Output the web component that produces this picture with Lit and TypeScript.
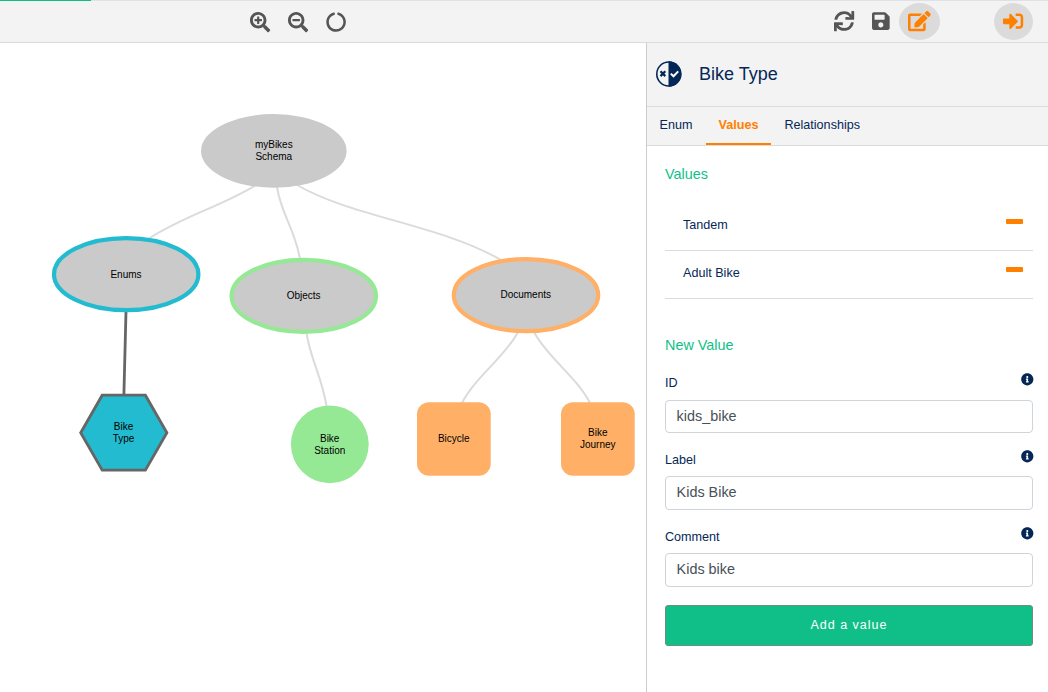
import { LitElement, html, svg, css } from "lit";
import { customElement, property } from "lit/decorators.js";

const ICONS: Record<string, { w: number; d: string }> = {
  zoomIn: { w: 512, d: "M304 192v32c0 6.6-5.4 12-12 12h-56v56c0 6.6-5.4 12-12 12h-32c-6.6 0-12-5.4-12-12v-56h-56c-6.6 0-12-5.4-12-12v-32c0-6.6 5.4-12 12-12h56v-56c0-6.6 5.4-12 12-12h32c6.6 0 12 5.4 12 12v56h56c6.6 0 12 5.4 12 12zm201 284.7L476.7 505c-9.4 9.4-24.6 9.4-33.9 0L343 405.3c-4.5-4.5-7-10.6-7-17V372c-35.3 27.6-79.7 44-128 44C93.1 416 0 322.9 0 208S93.1 0 208 0s208 93.1 208 208c0 48.3-16.4 92.7-44 128h16.3c6.4 0 12.5 2.5 17 7l99.7 99.7c9.3 9.4 9.3 24.6 0 34zM344 208c0-75.2-60.8-136-136-136S72 132.8 72 208s60.8 136 136 136 136-60.8 136-136z" },
  zoomOut: { w: 512, d: "M304 192v32c0 6.6-5.4 12-12 12H124c-6.6 0-12-5.4-12-12v-32c0-6.6 5.4-12 12-12h168c6.6 0 12 5.4 12 12zm201 284.7L476.7 505c-9.4 9.4-24.6 9.4-33.9 0L343 405.3c-4.5-4.5-7-10.6-7-17V372c-35.3 27.6-79.7 44-128 44C93.1 416 0 322.9 0 208S93.1 0 208 0s208 93.1 208 208c0 48.3-16.4 92.7-44 128h16.3c6.4 0 12.5 2.5 17 7l99.7 99.7c9.3 9.4 9.3 24.6 0 34zM344 208c0-75.2-60.8-136-136-136S72 132.8 72 208s60.8 136 136 136 136-60.8 136-136z" },
  notch: { w: 512, d: "M288 39.056v16.659c0 10.804 7.281 20.159 17.686 23.066C383.204 100.434 440 171.518 440 256c0 101.689-82.295 184-184 184-101.689 0-184-82.295-184-184 0-84.47 56.786-155.564 134.312-177.219C216.719 75.874 224 66.517 224 55.712V39.064c0-15.709-14.834-27.153-30.046-23.234C86.603 43.482 7.394 141.206 8.003 257.332c.72 137.052 111.477 246.956 248.531 246.667C393.255 503.711 504 392.788 504 256c0-115.633-79.14-212.779-186.211-240.236C302.678 11.889 288 23.456 288 39.056z" },
  sync: { w: 512, d: "M440.65 12.57l4 82.77A247.16 247.16 0 0 0 255.83 8C134.73 8 33.91 94.92 12.29 209.82A12 12 0 0 0 24.09 224h49.05a12 12 0 0 0 11.67-9.26 175.91 175.91 0 0 1 317-56.94l-101.46-4.86a12 12 0 0 0-12.57 12v47.41a12 12 0 0 0 12 12H500a12 12 0 0 0 12-12V12a12 12 0 0 0-12-12h-47.37a12 12 0 0 0-11.98 12.57zM255.83 432a175.61 175.61 0 0 1-146-77.8l101.8 4.87a12 12 0 0 0 12.57-12v-47.4a12 12 0 0 0-12-12H12a12 12 0 0 0-12 12V500a12 12 0 0 0 12 12h47.35a12 12 0 0 0 12-12.6l-4.15-82.57A247.17 247.17 0 0 0 255.83 504c121.11 0 221.93-86.92 243.55-201.82a12 12 0 0 0-11.8-14.18h-49.05a12 12 0 0 0-11.67 9.26A175.86 175.86 0 0 1 255.83 432z" },
  save: { w: 448, d: "M433.941 129.941l-83.882-83.882A48 48 0 0 0 316.118 32H48C21.49 32 0 53.49 0 80v352c0 26.51 21.49 48 48 48h352c26.51 0 48-21.49 48-48V163.882a48 48 0 0 0-14.059-33.941zM224 416c-35.346 0-64-28.654-64-64 0-35.346 28.654-64 64-64s64 28.654 64 64c0 35.346-28.654 64-64 64zm96-304.52V212c0 6.627-5.373 12-12 12H76c-6.627 0-12-5.373-12-12V108c0-6.627 5.373-12 12-12h228.52c3.183 0 6.235 1.264 8.485 3.515l3.48 3.48A11.996 11.996 0 0 1 320 111.48z" },
  edit: { w: 576, d: "M402.6 83.2l90.2 90.2c3.8 3.8 3.8 10 0 13.8L274.4 405.6l-92.8 10.3c-12.4 1.4-22.9-9.1-21.5-21.5l10.3-92.8L388.8 83.2c3.8-3.8 10-3.8 13.8 0zm162-22.9l-48.8-48.8c-15.2-15.2-39.9-15.2-55.2 0l-35.4 35.4c-3.8 3.8-3.8 10 0 13.8l90.2 90.2c3.8 3.8 10 3.8 13.8 0l35.4-35.4c15.2-15.3 15.2-40 0-55.2zM384 346.2V448H64V128h229.8c3.2 0 6.2-1.3 8.5-3.5l40-40c7.6-7.6 2.2-20.5-8.5-20.5H48C21.5 64 0 85.5 0 112v352c0 26.5 21.5 48 48 48h352c26.5 0 48-21.5 48-48V306.2c0-10.7-12.9-16-20.5-8.5l-40 40c-2.2 2.3-3.5 5.3-3.5 8.5z" },
  signIn: { w: 512, d: "M416 448h-84c-6.6 0-12-5.4-12-12v-40c0-6.6 5.4-12 12-12h84c17.7 0 32-14.3 32-32V160c0-17.7-14.3-32-32-32h-84c-6.6 0-12-5.4-12-12V76c0-6.6 5.4-12 12-12h84c53 0 96 43 96 96v192c0 53-43 96-96 96zm-47-201L201 79c-15-15-41-4.5-41 17v96H24c-13.3 0-24 10.7-24 24v96c0 13.3 10.7 24 24 24h136v96c0 21.5 26 32 41 17l168-168c9.3-9.4 9.3-24.6 0-34z" },
  info: { w: 512, d: "M256 8C119.043 8 8 119.083 8 256c0 136.997 111.043 248 248 248s248-111.003 248-248C504 119.083 392.957 8 256 8zm0 110c23.196 0 42 18.804 42 42s-18.804 42-42 42-42-18.804-42-42 18.804-42 42-42zm56 254c0 6.627-5.373 12-12 12h-88c-6.627 0-12-5.373-12-12v-24c0-6.627 5.373-12 12-12h12v-64h-12c-6.627 0-12-5.373-12-12v-24c0-6.627 5.373-12 12-12h64c6.627 0 12 5.373 12 12v100h12c6.627 0 12 5.373 12 12v24z" },
};

@customElement("ui-icon")
class UiIcon extends LitElement {
  @property() name = "info";
  @property({ type: Number }) size = 20;
  static styles = css`
    :host { display: block; line-height: 0; }
    svg { display: block; fill: currentColor; overflow: visible; }
  `;
  render() {
    const i = ICONS[this.name];
    return html`<svg width=${(this.size * i.w) / 512} height=${this.size} viewBox="0 0 ${i.w} 512"><path d=${i.d}></path></svg>`;
  }
}

interface GraphNode { lines: string[]; x: number; y: number; }

@customElement("schema-graph")
class SchemaGraph extends LitElement {
  static styles = css`
    :host { display: block; overflow: hidden; background: #fff; }
    svg { display: block; }
    .edge { fill: none; stroke: #dbdbdb; stroke-width: 2; }
    .edge-active { fill: none; stroke: #666; stroke-width: 2.8; }
    .group { fill: #cacaca; stroke-width: 4.2; }
    .root { fill: #cacaca; }
    .enums { stroke: #22bbcf; }
    .objects { stroke: #95e995; }
    .documents { stroke: #ffb066; }
    .hex { fill: #22bbcf; stroke: #666; stroke-width: 2.8; }
    .object { fill: #95e995; }
    .document { fill: #ffb066; }
    text { font: 10px "Liberation Sans", Arial, sans-serif; fill: #000; text-anchor: middle; }
  `;
  private labels: GraphNode[] = [
    { lines: ["myBikes", "Schema"], x: 273.8, y: 148 },
    { lines: ["Enums"], x: 126, y: 278 },
    { lines: ["Objects"], x: 303.6, y: 299 },
    { lines: ["Documents"], x: 525.7, y: 298 },
    { lines: ["Bike", "Type"], x: 123.6, y: 430 },
    { lines: ["Bike", "Station"], x: 329.7, y: 442 },
    { lines: ["Bicycle"], x: 453.8, y: 442 },
    { lines: ["Bike", "Journey"], x: 597.8, y: 436 },
  ];
  render() {
    return html`<svg width="646" height="649" viewBox="0 43 646 649">
      <path class="edge" d="M256 185C218 208 187 214 148 239"></path>
      <path class="edge" d="M277 187C281 214 295 229 300 259"></path>
      <path class="edge" d="M297 185C352 217 441 225 501 260"></path>
      <path class="edge" d="M306.5 333C310 358 322 377 326.5 406"></path>
      <path class="edge" d="M518 332C505 357 476 376 462 403"></path>
      <path class="edge" d="M534 332C547 357 576 376 590 403"></path>
      <path class="edge-active" d="M126 311L123.9 395"></path>
      <ellipse class="root" cx="273.8" cy="150.9" rx="72.8" ry="36.8"></ellipse>
      <ellipse class="group enums" cx="126.2" cy="274.2" rx="72.2" ry="36"></ellipse>
      <ellipse class="group objects" cx="303.8" cy="295.9" rx="72.2" ry="36"></ellipse>
      <ellipse class="group documents" cx="526" cy="295.1" rx="72.2" ry="36"></ellipse>
      <polygon class="hex" points="80.7,432.7 102.2,395.2 145.4,395.2 166.9,432.7 145.4,470.1 102.2,470.1"></polygon>
      <circle class="object" cx="329.8" cy="444.3" r="38.9"></circle>
      <rect class="document" x="417" y="402.2" width="73.7" height="73.6" rx="12"></rect>
      <rect class="document" x="561" y="402.2" width="73.7" height="73.6" rx="12"></rect>
      ${this.labels.map((n) => n.lines.map((t, i) => svg`<text x=${n.x} y=${n.y + i * 12}>${t}</text>`))}
    </svg>`;
  }
}

@customElement("side-panel")
class SidePanel extends LitElement {
  static styles = css`
    :host { display: block; box-sizing: border-box; border-left: 1px solid #ccc; background: #fff; color: #052757; font-size: 12.6px; }
    .head { display: flex; align-items: center; box-sizing: border-box; height: 64px; padding: 0 0 2px 9px; background: #f3f3f3; border-bottom: 1px solid #dbdbdb; }
    .head svg { display: block; margin-right: 17px; }
    .title { font-size: 18px; line-height: 22px; }
    .tabs { display: flex; height: 38px; background: #f3f3f3; border-bottom: 1px solid #dbdbdb; }
    .tab { box-sizing: border-box; height: 38px; padding: 10px 13px 0; line-height: 16px; border-bottom: 2px solid transparent; }
    .tab:first-child { padding-left: 12.6px; }
    .active { color: #ff8000; font-weight: bold; border-color: #ff8000; }
    .body { padding: 17px 15px 0 18px; }
    h3 { margin: 0; font-size: 14.4px; font-weight: normal; line-height: 22px; color: #10bf88; }
    .values { padding-top: 18px; margin-bottom: 35px; }
    .row { display: flex; justify-content: space-between; height: 47px; padding: 0 10px 0 18px; border-bottom: 1px solid #dbdbdb; line-height: 44px; }
    .minus { width: 17px; height: 5px; margin-top: 16px; border-radius: 1px; background: #ff8000; }
    .field { display: flex; flex-direction: column; height: 76.8px; }
    .label { display: flex; justify-content: space-between; height: 27.6px; line-height: 20px; margin-right: -0.4px; }
    .label span { padding-top: 1px; }
    .label ui-icon { padding-top: 1px; }
    .input { box-sizing: border-box; height: 33.5px; padding: 0 10.6px; border: 1px solid #ced4da; border-radius: 4px; line-height: 31.4px; font-size: 14.4px; color: #495057; }
    .fields { padding-top: 16px; }
    .button { box-sizing: border-box; display: flex; align-items: center; justify-content: center; height: 41px; margin-top: 2.6px; border: 1px solid #6c8f80; border-radius: 3px; background: #10bf88; color: #fff; font-size: 12.5px; letter-spacing: 1px; }
  `;
  render() {
    const fields = [["ID", "kids_bike"], ["Label", "Kids Bike"], ["Comment", "Kids bike"]];
    return html`
      <div class="head">
        <svg width="26" height="26" viewBox="0 0 26 26">
          <circle cx="12.8" cy="13" r="12" fill="#f3f3f3" stroke="#052757" stroke-width="1.6"></circle>
          <path d="M12.5 .2A12.8 12.8 0 0 1 12.5 25.8Z" fill="#052757"></path>
          <path d="M4.5 10.3L9.3 15.1M9.3 10.3L4.5 15.1" stroke="#052757" stroke-width="2.2" fill="none"></path>
          <path d="M14.8 12.6L17.5 15.3L22.2 10.4" stroke="#fff" stroke-width="2" fill="none"></path>
        </svg>
        <div class="title">Bike Type</div>
      </div>
      <div class="tabs">
        <div class="tab">Enum</div><div class="tab active">Values</div><div class="tab">Relationships</div>
      </div>
      <div class="body">
        <h3>Values</h3>
        <div class="values">
          ${["Tandem", "Adult Bike"].map((v) => html`<div class="row"><span>${v}</span><div class="minus"></div></div>`)}
        </div>
        <h3>New Value</h3>
        <div class="fields">
          ${fields.map(([l, v]) => html`<div class="field">
            <div class="label"><span>${l}</span><ui-icon name="info" size="12.6"></ui-icon></div>
            <div class="input">${v}</div>
          </div>`)}
        </div>
        <div class="button">Add a value</div>
      </div>`;
  }
}

@customElement("app-root")
class AppRoot extends LitElement {
  static styles = css`
    :host { display: flex; flex-direction: column; height: 692px; width: 1048px; overflow: hidden; background: #fff; font-family: "Liberation Sans", Arial, sans-serif; }
    .progress { height: 1px; background: #dee2e6; }
    .bar { height: 1px; width: 91px; background: #10bf88; }
    .toolbar { display: flex; align-items: center; box-sizing: border-box; height: 42px; padding: 0 15px 0 249.5px; background: #f3f3f3; border-bottom: 1px solid #dbdbdb; color: #555; }
    .zoom { display: flex; gap: 18.2px; margin-right: auto; padding-top: 0.8px; }
    .sync { margin-right: 18px; }
    .save { margin-right: 9px; }
    .round { display: flex; align-items: center; justify-content: center; height: 37px; width: 41px; border-radius: 50%; background: #dbdbdb; color: #ff8000; }
    .exit { width: 39px; margin-left: 54px; }
    .main { display: flex; height: 649px; }
    schema-graph { width: 646px; }
    side-panel { width: 402px; }
  `;
  render() {
    return html`
      <div class="progress"><div class="bar"></div></div>
      <div class="toolbar">
        <div class="zoom">
          <ui-icon name="zoomIn" size="20.2"></ui-icon>
          <ui-icon name="zoomOut" size="20.2"></ui-icon>
          <ui-icon name="notch" size="20.2"></ui-icon>
        </div>
        <ui-icon class="sync" name="sync" size="20.2"></ui-icon>
        <ui-icon class="save" name="save" size="20.2"></ui-icon>
        <div class="round"><ui-icon name="edit" size="20.2"></ui-icon></div>
        <div class="round exit"><ui-icon name="signIn" size="20.2"></ui-icon></div>
      </div>
      <div class="main"><schema-graph></schema-graph><side-panel></side-panel></div>`;
  }
}
